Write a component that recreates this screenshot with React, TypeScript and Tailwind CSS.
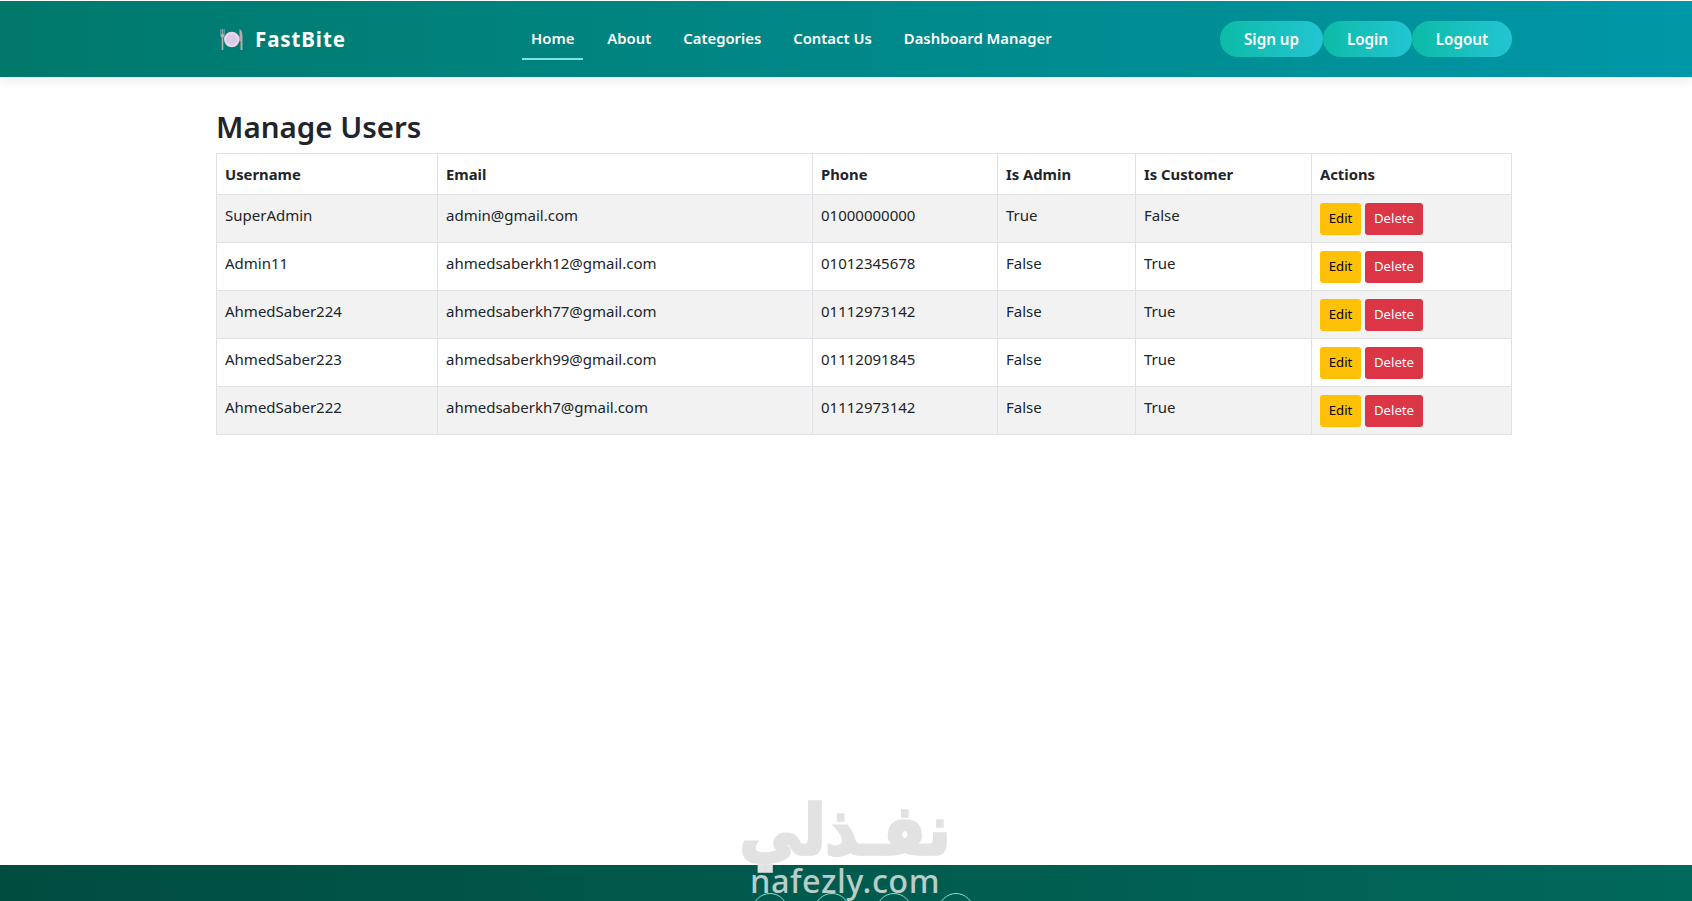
const font = "font-['Segoe_UI','Noto_Sans','Open_Sans',sans-serif]";

const users = [
  { name: "SuperAdmin", email: "admin@gmail.com", phone: "01000000000", admin: "True", customer: "False" },
  { name: "Admin11", email: "ahmedsaberkh12@gmail.com", phone: "01012345678", admin: "False", customer: "True" },
  { name: "AhmedSaber224", email: "ahmedsaberkh77@gmail.com", phone: "01112973142", admin: "False", customer: "True" },
  { name: "AhmedSaber223", email: "ahmedsaberkh99@gmail.com", phone: "01112091845", admin: "False", customer: "True" },
  { name: "AhmedSaber222", email: "ahmedsaberkh7@gmail.com", phone: "01112973142", admin: "False", customer: "True" },
];

const PlateIcon = () => (
  <svg width="23" height="23" viewBox="0 0 23 23" className="ml-[4px] shrink-0">
    <path d="M0.5 1v6q0 2 1.2 2.6V22h1.6V9.6q1.2-.6 1.2-2.6V1h-.8v5h-.8V1h-.8v5h-.8V1z" fill="#b5aab0" />
    <path d="M19.5 1q3 1 3 8v13h-2V13h-1z" fill="#b5aab0" />
    <circle cx="11.8" cy="11.5" r="7.8" fill="#e6d5ee" />
    <circle cx="11.8" cy="11.5" r="5" fill="#dcc8e8" />
  </svg>
);

const Navbar = () => (
  <nav className="h-[76px] mt-px bg-gradient-to-r from-[#00796b] to-[#0097a7] shadow-[0_4px_12px_rgba(0,0,0,0.08)] flex items-center pl-[216px] pr-[180px]">
    <div className="w-[306px] flex items-center gap-[12px]">
      <PlateIcon />
      <span className="text-[20.5px] font-bold text-white tracking-[0.9px]">FastBite</span>
    </div>
    <div className="flex items-center gap-[16px] text-white text-[14.85px] leading-[24px] font-semibold">
      <a className="px-[9px] py-2 border-b-2 border-[#7fe3e0]">Home</a>
      <a className="px-2 py-2 border-b-2 border-transparent">About</a>
      <a className="px-2 py-2 border-b-2 border-transparent">Categories</a>
      <a className="px-2 py-2 border-b-2 border-transparent">Contact Us</a>
      <a className="px-2 py-2 border-b-2 border-transparent">Dashboard Manager</a>
    </div>
    <div className="ml-auto flex text-white text-[15.2px] font-semibold">
      <button className="h-9 w-[103px] rounded-full bg-gradient-to-r from-[#0cbba6] to-[#22c5d3]">Sign up</button>
      <button className="h-9 w-[89px] rounded-full bg-gradient-to-r from-[#0cbba6] to-[#22c5d3]">Login</button>
      <button className="h-9 w-[100px] rounded-full bg-gradient-to-r from-[#0cbba6] to-[#22c5d3]">Logout</button>
    </div>
  </nav>
);

const UsersTable = () => (
  <table className="w-[1296px] table-fixed border-collapse text-[15px] text-[#212529]">
    <thead>
      <tr className="h-[41px] font-bold text-left text-[14.8px]">
        <th className="w-[221px] border border-[#dee2e6] px-2">Username</th>
        <th className="w-[375px] border border-[#dee2e6] px-2">Email</th>
        <th className="w-[185px] border border-[#dee2e6] px-2">Phone</th>
        <th className="w-[138px] border border-[#dee2e6] px-2">Is Admin</th>
        <th className="w-[176px] border border-[#dee2e6] px-2">Is Customer</th>
        <th className="border border-[#dee2e6] px-2">Actions</th>
      </tr>
    </thead>
    <tbody>
      {users.map((u, i) => (
        <tr key={u.name} className={i % 2 === 0 ? "h-[48px] bg-[#f2f2f2]" : "h-[48px] bg-white"}>
          <td className="border border-[#dee2e6] px-2 align-top pt-[9px]">{u.name}</td>
          <td className="border border-[#dee2e6] px-2 align-top pt-[9px]">{u.email}</td>
          <td className="border border-[#dee2e6] px-2 align-top pt-[9px]">{u.phone}</td>
          <td className="border border-[#dee2e6] px-2 align-top pt-[9px]">{u.admin}</td>
          <td className="border border-[#dee2e6] px-2 align-top pt-[9px]">{u.customer}</td>
          <td className="border border-[#dee2e6] px-2 align-top pt-2">
            <div className="flex gap-1 text-[13.2px]">
              <button className="h-[32px] w-[41px] rounded-[3px] bg-[#ffc107] text-black">Edit</button>
              <button className="h-[32px] w-[58px] rounded-[3px] bg-[#dc3545] text-white">Delete</button>
            </div>
          </td>
        </tr>
      ))}
    </tbody>
  </table>
);

const Footer = () => (
  <footer className="h-[36px] overflow-hidden bg-gradient-to-r from-[#004d40] to-[#00695c] flex justify-center gap-[26px] pl-[34px]">
    {[0, 1, 2, 3].map((n) => (
      <div key={n} className="w-9 h-9 mt-[28px] rounded-full border border-[#7fe3d0] shrink-0" />
    ))}
  </footer>
);

// logo over the page bottom, sits on top of both main and footer
const Watermark = () => (
  <div className="absolute left-[695px] top-[787px] w-[300px] flex flex-col items-center pointer-events-none">
    <span className="h-[74px] text-[62px] leading-[74px] font-bold text-[#e2e2e2] scale-y-110 [-webkit-text-stroke:3px_#e2e2e2] font-['Noto_Sans_CJK_SC','DejaVu_Sans',sans-serif]">نفـذلي</span>
    <span className="mt-[4px] text-[32.5px] leading-[32px] font-medium tracking-[0.5px] text-[#b9ccc8] font-['Noto_Sans',sans-serif]">nafezly.com</span>
  </div>
);

export default function App() {
  return (
    <div className={`relative h-[901px] overflow-hidden flex flex-col bg-white ${font}`}>
      <Navbar />
      <main className="flex-1 pl-[216px] pt-[31px]">
        <h2 className="text-[29.5px] leading-[38px] font-semibold text-[#212529] mb-[7px]">Manage Users</h2>
        <UsersTable />
      </main>
      <Footer />
      <Watermark />
    </div>
  );
}
